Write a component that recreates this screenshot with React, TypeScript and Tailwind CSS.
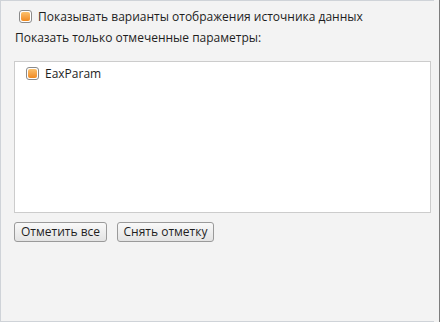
import { useState } from 'react';

function OrangeCheck() {
  return (
    <span className="inline-flex w-[13px] h-[13px] shrink-0 items-center justify-center rounded-[3px] border border-[#8a8a8a] bg-white">
      <span className="block w-[9px] h-[9px] rounded-[2px] bg-gradient-to-b from-[#fbc06a] to-[#f08a1c]" />
    </span>
  );
}

export default function App() {
  const [items] = useState(['EaxParam']);

  return (
    <div
      className="flex w-[440px] h-[322px] bg-[#f3f3f3] text-[12px] text-[#1e1e1e]"
      style={{ fontFamily: '"Open Sans", "DejaVu Sans", sans-serif' }}
    >
      <div className="flex flex-col w-[434px] h-full border-l border-t border-b border-[#cfd3d8] pl-[13px] pr-[3px]">
        {/* Top option */}
        <label className="flex items-center gap-[6px] mt-[8px] ml-[5px] h-[15px]">
          <OrangeCheck />
          <span>Показывать варианты отображения источника данных</span>
        </label>

        <p className="mt-[6px] ml-[1px] h-[15px] leading-[15px]">Показать только отмеченные параметры:</p>

        {/* Parameters list */}
        <div className="mt-[16px] h-[152px] bg-white border border-[#cccccc] pt-[4px] pl-[11px]">
          {items.map((name) => (
            <label key={name} className="flex items-center gap-[6px] h-[15px]">
              <OrangeCheck />
              <span>{name}</span>
            </label>
          ))}
        </div>

        {/* Buttons */}
        <div className="flex gap-[10px] mt-[9px]">
          <button className="h-[20px] w-[93px] rounded-[3px] border border-[#9a9a9a] bg-gradient-to-b from-[#f9f9f9] to-[#e3e3e3] text-[12px] leading-none">
            Отметить все
          </button>
          <button className="h-[20px] w-[97px] rounded-[3px] border border-[#9a9a9a] bg-gradient-to-b from-[#f9f9f9] to-[#e3e3e3] text-[12px] leading-none">
            Снять отметку
          </button>
        </div>
      </div>
      <div className="ml-auto w-px h-full bg-[#7d7d7d]" />
    </div>
  );
}
